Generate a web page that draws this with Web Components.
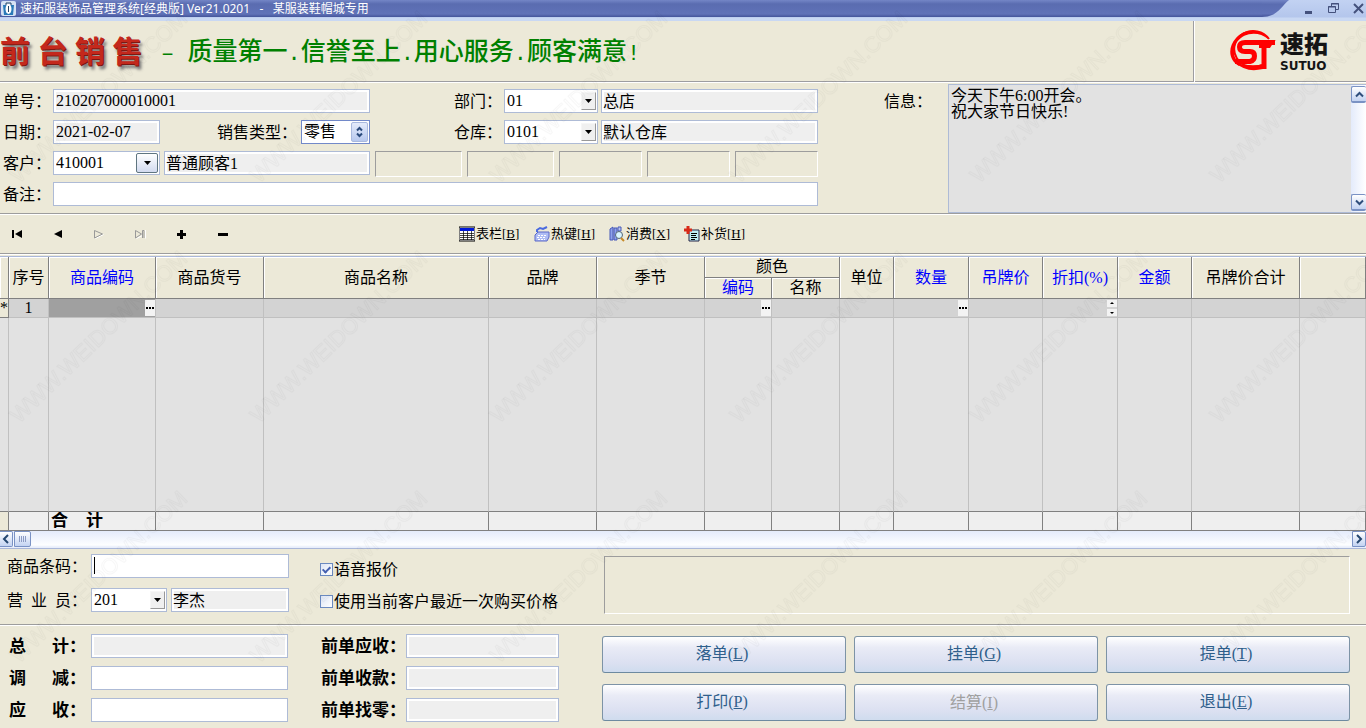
<!DOCTYPE html>
<html lang="zh-CN">
<head>
<meta charset="utf-8">
<title>速拓服装饰品管理系统</title>
<style>
html,body{margin:0;height:100%}
body{font:16px/20px "Liberation Serif","Noto Sans CJK SC",serif;color:#000;background:#ece9d8}
</style>
</head>
<body>
<st-window></st-window>
<script>
const define=(name,html,setup)=>{
  const t=document.createElement('template');
  t.innerHTML='<style>*{box-sizing:border-box}:host{display:block;box-sizing:border-box}</style>'+html;
  customElements.define(name,class extends HTMLElement{
    constructor(){super();this.attachShadow({mode:'open'})}
    connectedCallback(){
      if(this.shadowRoot.childNodes.length)return;
      this.shadowRoot.append(t.content.cloneNode(true));
      if(setup)setup(this,this.shadowRoot);
    }
  });
};

define('st-titlebar',`
<style>
:host{height:21px;background:linear-gradient(#c2d2f2,#b4c6ec 17px,#c9d8f3 18px);flex:none}
header{display:flex;height:21px;align-items:flex-start}
.main{flex:1;display:flex;align-items:center;height:17px;gap:4px;padding-left:1px;background:linear-gradient(#7486c6,#5a6cb0 4px,#6072b8 14px,#44549a);color:#fff;font:12px/16px "Noto Sans","Noto Sans CJK SC",sans-serif;white-space:pre}
.tail{width:34px;height:17px;flex:none}
nav{display:flex;width:70px;height:17px;align-items:center;gap:8px;padding-left:4px;overflow:hidden}
button{border:0;background:none;padding:0;width:17px;height:16px;flex:none}
svg{display:block}
</style>
<header><div class="main">
<svg width="15" height="15" viewBox="0 0 15 15"><rect width="15" height="15" rx="2" fill="#d6e2f4"/><path d="M2 4h11l-1 10H3z" fill="#2a7ab8"/><path d="M5 4V2h5v2" stroke="#246" fill="none"/><ellipse cx="7.500" cy="8" rx="3" ry="5" fill="#fff"/><path d="M7 5h1v6H7z" fill="#246"/></svg>
<span>速拓服装饰品管理系统[经典版] Ver21.0201   -   某服装鞋帽城专用</span></div>
<svg class="tail" viewBox="0 0 34 17"><defs><linearGradient id="g" x2="0" y2="1"><stop stop-color="#7486c6"/><stop offset=".25" stop-color="#5a6cb0"/><stop offset=".8" stop-color="#6072b8"/><stop offset="1" stop-color="#44549a"/></linearGradient></defs><path d="M0 0H27C20 5 16 17 0 17z" fill="url(#g)"/></svg>
<nav>
<button aria-label="最小化"><svg width="17" height="16"><path d="M5 10h7v3H5z" fill="#44517c"/></svg></button>
<button aria-label="还原"><svg width="17" height="16" fill="none" stroke="#44517c"><path d="M6.500 5V2.500h7v6H11M6 3h8"/><path d="M3.500 5.500h7v6h-7zM3 6h8"/></svg></button>
<button aria-label="关闭"><svg width="17" height="16"><path d="M4 3l9 9M13 3l-9 9" stroke="#44517c" stroke-width="2"/></svg></button>
</nav></header>`);

define('st-logo',`
<style>
:host{display:flex;gap:4px;align-items:center}
.n{display:flex;flex-direction:column;gap:4px;font-family:"Noto Sans CJK SC",sans-serif}
b{font-size:24px;line-height:26px;font-weight:900;color:#151515}
span{font:bold 12px/12px "DejaVu Sans",sans-serif;color:#151515}
</style>
<svg width="47" height="41" viewBox="0 0 47 41" fill="none" stroke="#f00">
<path d="M40 9A19 18 0 1 0 33 35" stroke-width="2"/>
<path d="M39 9C32-2 16-2 7 8C-2 18 0 31 10 36L12 34C4 29 3 20 8 12C15 2 30 1 39 9z" fill="#f00" stroke="none"/>
<path d="M46 12.500H16Q10.500 12.500 10.500 17T16 21.500H21Q25.500 21.500 25.500 26T21 31.500H6" stroke-width="5"/>
<path d="M35 15V39" stroke-width="5"/><path d="M7 33Q17 43 34 39L36 34Q22 37 7 33z" fill="#f00" stroke="none"/>
<path d="M47 10Q43 14 41 18H30V15H38z" fill="#f00" stroke="none"/>
</svg>
<div class="n"><b>速拓</b><span>SUTUO</span></div>`);

define('st-banner',`
<style>
:host{display:flex;height:62px;flex:none;border-bottom:1px solid #fff;box-shadow:inset 0 -1px #9d9da1}
.l{flex:1;display:flex;align-items:center;white-space:nowrap}
h1{margin:0;width:161px;font:bold 30px/56px "Liberation Serif","Noto Sans CJK SC",serif;color:#c4281c;text-shadow:1px 1px #7c1812,3px 4px 3px #777}
p{margin:0;color:#008000;font-size:25px;line-height:60px;font-weight:500}
i{font:22px/20px "Liberation Mono",monospace}
.r{width:173px;border-left:1px solid #9d9da1;box-shadow:inset 1px 0 #fff;padding:0 0 2px 35px;display:flex}
</style>
<div class="l"><h1>前 台 销 售</h1><p><i>– </i>质量第一<i>.</i>信誉至上<i>.</i>用心服务<i>.</i>顾客满意<i>!</i></p></div>
<div class="r"><st-logo></st-logo></div>`);

/* Labelled control. kind: text | list (flat arrow) | combo (raised arrow) | spin */
define('st-field',`
<style>
:host{display:flex;align-items:center;height:24px;flex:none}
:host([grow]){flex:1;min-width:0}
label{width:var(--label,50px);flex:none;white-space:nowrap;line-height:24px;padding-top:2px}
:host([strong]) label{font-weight:bold;font-size:17px}
label span{display:inline-block;width:var(--spread);text-align:justify;text-align-last:justify}
.box{position:relative;flex:1;display:flex;height:24px;min-width:0}
input,select{appearance:none;flex:1;min-width:0;width:100%;height:24px;margin:0;padding:0 2px;border:1px solid #aebbd6;border-radius:0;background:#fff;color:#000;font:inherit;line-height:20px;outline:0}
input[readonly]{background:#efefef;box-shadow:inset 0 0 0 2px #fff}
:host([name]) input{padding:0 1px 3px}
.arrow{position:absolute;top:3px;right:2px;width:15px;height:18px;background:#f0f0f0;border:1px solid;border-color:#f6f6f6 #999 #999 #f6f6f6;display:flex;align-items:center;justify-content:center;pointer-events:none}
:host([kind=combo]) .arrow{top:2px;width:22px;height:20px;border:1px solid #5f7580;border-radius:2px;background:linear-gradient(#fff,#d2daef)}
:host([kind=spin]) .arrow{top:2px;width:17px;height:20px;border:1px solid #a9b9de;border-radius:2px;background:linear-gradient(#e4ebfb,#b7c8ee)}
:host([kind=spin]) select{border-color:#7289c9}
</style>
<label for="c"></label><div class="box"></div>`,(el,root)=>{
  const kind=el.getAttribute('kind')||'text',label=root.querySelector('label'),box=root.querySelector('.box');
  const text=el.getAttribute('label'),value=el.getAttribute('value')||'';
  let c;
  if(kind==='text'){
    c=document.createElement('input');c.value=value;c.readOnly=el.hasAttribute('readonly');
    box.append(c);
  }else{
    c=document.createElement('select');c.add(new Option(value));
    const a=document.createElement('span');a.className='arrow';
    a.innerHTML=kind==='spin'
      ?'<svg width="9" height="12" fill="none" stroke="#2a4a7c" stroke-width="2"><path d="M2 4.500l2.500-2.500 2.500 2.500M2 7.500l2.500 2.500 2.500-2.500"/></svg>'
      :'<svg width="7" height="4"><path d="M0 0h7L3.500 4z"/></svg>';
    box.append(c,a);
  }
  c.id='c';
  if(text){
    if(text.includes(' ')){const s=document.createElement('span');s.textContent=text.slice(0,-1);label.append(s,'：')}
    else label.textContent=text;
  }else{label.remove();c.setAttribute('aria-label',el.getAttribute('name')||'')}
  if(el.hasAttribute('caret')){
    const k=document.createElement('span');k.style.cssText='position:absolute;left:3px;top:3px;width:1px;height:17px;background:#000';box.append(k);
  }
});

define('st-well',`<style>:host{border:1px solid;border-color:#9d9d9d #fff #fff #9d9d9d}</style><slot></slot>`);

define('st-memo',`
<style>
:host{display:flex;flex:1;min-width:0}
label{width:64px;line-height:36px;flex:none}
.b{flex:1;display:flex;border:1px solid #aebbd6;border-right:0;background:#e2e2e2;min-width:0}
textarea{flex:1;min-width:0;resize:none;border:0;margin:0;padding:3px 2px;background:none;font:inherit;line-height:16px;overflow:hidden;outline:0;color:#000}
.s{width:15px;display:flex;flex-direction:column;justify-content:space-between;padding:1px 0;background:linear-gradient(90deg,#e4ebfb,#fff)}
button{width:15px;height:17px;border:1px solid #7a92c4;border-width:1px 0 2px 1px;border-radius:2px;background:linear-gradient(#fff,#c3d3f2);padding:0;display:flex;align-items:center;justify-content:center}
</style>
<label for="m">信息：</label><div class="b"><textarea id="m" readonly>今天下午6:00开会。
祝大家节日快乐!</textarea><div class="s">
<button aria-label="向上"><svg width="9" height="7"><path d="M1 5.500l3.500-3.500L8 5.500" fill="none" stroke="#2f4e7c" stroke-width="2"/></svg></button>
<button aria-label="向下"><svg width="9" height="7"><path d="M1 1.500L4.500 5 8 1.500" fill="none" stroke="#2f4e7c" stroke-width="2"/></svg></button></div></div>`);

define('st-order',`
<style>
:host{display:flex;height:132px;flex:none;padding-left:3px;border-bottom:1px solid #fff;box-shadow:inset 0 -1px #9d9d9d}
.f{display:flex;flex-direction:column;gap:7px;padding-top:6px;width:815px;margin-right:66px;flex:none}
.r{display:flex;height:24px}
.l{display:flex;width:367px;justify-content:space-between;flex:none}
.q{display:flex;gap:3px;margin-left:84px;width:364px}
.w{display:flex;gap:5px;margin-left:5px;height:26px}
st-memo{padding:1px 0}
</style>
<div class="f">
<div class="r"><div class="l"><st-field grow label="单号：" value="210207000010001" readonly></st-field></div>
<div class="q"><st-field kind="list" label="部门：" value="01" style="width:144px"></st-field><st-field grow readonly name="部门名称" value="总店"></st-field></div></div>
<div class="r"><div class="l"><st-field label="日期：" value="2021-02-07" readonly style="width:157px"></st-field><st-field kind="spin" label="销售类型：" value="零售" style="width:153px;--label:84px"></st-field></div>
<div class="q"><st-field kind="list" label="仓库：" value="0101" style="width:144px"></st-field><st-field grow readonly name="仓库名称" value="默认仓库"></st-field></div></div>
<div class="r"><div class="l"><st-field kind="combo" label="客户：" value="410001" style="width:157px"></st-field><st-field readonly name="客户名称" value="普通顾客1" style="width:206px"></st-field></div>
<div class="w"><st-well style="width:87px"></st-well><st-well style="width:87px"></st-well><st-well style="width:83px"></st-well><st-well style="width:83px"></st-well><st-well style="width:83px"></st-well></div></div>
<div class="r"><st-field grow label="备注："></st-field></div>
</div><st-memo></st-memo>`);

const toolIcons={
table:'<path d="M0 1h16v14H0z" fill="#fff" stroke="#000"/><path d="M1 2h14v3H1z" fill="#0018d8"/><path d="M1 7.500h14M1 9.500h14M1 11.500h14M1 13.500h14M4.500 5v9M8.500 5v9M12.500 5v9" stroke="#000" stroke-opacity=".7"/>',
keys:'<path d="M3 6V4l3-2 3 1 4-2" fill="none" stroke="#4a6ae0" stroke-width="2"/><path d="M1 9l3-3h11v5l-2 4H1z" fill="#aebcf4" stroke="#5a68c8"/><path d="M4 9.500h9M3 11.500h9M4 13.500h7" stroke="#fff" stroke-dasharray="2 1"/>',
search:'<path d="M1 3l3-2v13H1zM5 2h3v12H5z" fill="#8fa2ea" stroke="#4658b8"/><path d="M9 1h3v4H9z" fill="#b8c4f0" stroke="#4658b8"/><circle cx="10" cy="9" r="3.500" fill="#d8f4ff" stroke="#567"/><path d="M12 12l3 3" stroke="#c88a28" stroke-width="2"/>',
add:'<path d="M5 4h10v11H5z" fill="#bfeef4" stroke="#224"/><path d="M7 7.500h6M7 9.500h5M7 11.500h6M7 13.500h4" stroke="#000"/><path d="M4 0v8M0 4h8" stroke="#d82a18" stroke-width="3"/>'};
define('st-tool',`
<style>:host{width:75px}button{border:0;padding:0;background:none;display:flex;align-items:center;gap:1px;font:13px/18px "Liberation Serif","Noto Sans CJK SC",serif;color:#000;white-space:nowrap}svg{flex:none}</style>
<button><svg width="16" height="16" viewBox="0 0 16 16"></svg><span></span></button>`,(el,root)=>{
  root.querySelector('svg').innerHTML=toolIcons[el.getAttribute('icon')];
  root.querySelector('span').innerHTML=el.getAttribute('text')+'[<u>'+el.getAttribute('key')+'</u>]';
});

define('st-toolbar',`
<style>
:host{display:flex;height:40px;flex:none;align-items:center;border-bottom:1px solid #fff;box-shadow:inset 0 -1px #9d9d9d;padding:0 0 2px 11px}
nav{display:flex;gap:29px;width:448px;flex:none}
nav button{border:0;background:none;padding:0;width:12px;height:12px}
svg{display:block}
.t{display:flex}
</style>
<nav>
<button aria-label="首条"><svg width="12" height="12"><path d="M1 2h2v8H1zM11 2v8L4 6z"/></svg></button>
<button aria-label="上一条"><svg width="12" height="12"><path d="M10 2v8L2 6z"/></svg></button>
<button aria-label="下一条" disabled><svg width="12" height="12" fill="none"><path d="M2.500 10.500l8-4" stroke="#fff"/><path d="M1.500 10V2.500l8 3.500-8 4" stroke="#999"/></svg></button>
<button aria-label="末条" disabled><svg width="12" height="12" fill="none"><path d="M2.500 10.500l6-3M11.500 2v8.500" stroke="#fff"/><path d="M1.500 10V2.500l6 3.500-6 4M10 10V2.500h-1.500V10" stroke="#999"/></svg></button>
<button aria-label="新增"><svg width="12" height="12"><path d="M6.500 2v9M2 6.500h9" stroke="#000" stroke-width="3"/></svg></button>
<button aria-label="删除"><svg width="12" height="12"><path d="M2 5h10v3H2z"/></svg></button>
</nav>
<div class="t"><st-tool icon="table" text="表栏" key="B"></st-tool><st-tool icon="keys" text="热键" key="H"></st-tool><st-tool icon="search" text="消费" key="X"></st-tool><st-tool icon="add" text="补货" key="H"></st-tool></div>`);

define('st-grid',`
<style>
:host{display:grid;flex:1;margin-top:1px;border-top:1px solid #aab7d8;background:#e2e2e2;min-height:240px}
table{width:100%;height:100%;border-spacing:0;table-layout:fixed}
th,td{padding:0;border-right:1px solid #c0c0c0;border-bottom:1px solid #c0c0c0;overflow:hidden;white-space:nowrap;text-align:center}
th{background:#ece9d8;border-color:#808080;box-shadow:inset 1px 1px #fff;font-weight:normal;height:21px;line-height:20px}
th.k{color:#00f}
.cur td{height:19px;background:#d3d3d3;line-height:18px}
.cur .m,.sum .m{background:#ece9d8;border-color:#808080;line-height:14px}
.cur .on{background:#a0a0a0}
.fill td{height:100%;border-bottom-color:#808080}
.sum td{height:19px;background:#efefef;border-color:#808080;font-weight:bold;font-size:17px;line-height:18px}
.sum span{display:block;width:52px;margin-left:2px;text-align:justify;text-align-last:justify}
.e{display:block;margin:1px 0 1px auto;width:10px;height:16px;border:0;padding:0;background:#f3f3f3}
.e svg{display:block;margin:auto}
</style>
<table>
<colgroup></colgroup>
<thead><tr><th rowspan="2"></th><th rowspan="2">序号</th><th rowspan="2" class="k">商品编码</th><th rowspan="2">商品货号</th><th rowspan="2">商品名称</th><th rowspan="2">品牌</th><th rowspan="2">季节</th><th colspan="2">颜色</th><th rowspan="2">单位</th><th rowspan="2" class="k">数量</th><th rowspan="2" class="k">吊牌价</th><th rowspan="2" class="k">折扣(%)</th><th rowspan="2" class="k">金额</th><th rowspan="2">吊牌价合计</th><th rowspan="2"></th></tr>
<tr><th class="k">编码</th><th>名称</th></tr></thead>
<tbody></tbody></table>`,(el,root)=>{
  root.querySelector('colgroup').innerHTML=[9,40,107,108,225,108,108,67,68,54,75,74,75,74,108,0].map(w=>w?`<col style="width:${w}px">`:'<col>').join('');
  const dots='<button class="e" aria-label="选择"><svg width="10" height="16"><path d="M1 7h2v2H1zM4 7h2v2H4zM7 7h2v2H7z"/></svg></button>';
  const spin='<button class="e" aria-label="调整"><svg width="10" height="16"><path d="M0 7h10v2H0z" fill="#d3d3d3"/><path d="M3 4h4L5 2zM3 12h4l-2 2z"/></svg></button>';
  const row=(cls,map)=>`<tr class="${cls}">`+Array.from({length:16},(_,i)=>`<td${i===0?' class="m"':i===2&&cls==='cur'?' class="on"':''}>${map[i]||''}</td>`).join('')+'</tr>';
  root.querySelector('tbody').innerHTML=row('cur',{0:'*',1:'1',2:dots,7:dots,10:dots,12:spin})+row('fill',{})+row('sum',{2:'<span>合 计</span>'});
});

define('st-hscroll',`
<style>
:host{display:flex;height:18px;flex:none;background:linear-gradient(#e4ebfb,#fdfeff 14px,#e8eefb 16px);border-bottom:1px solid #aab7d8}
button{height:16px;padding:0;border:1px solid #7a92c4;border-left:0;border-radius:0 2px 2px 0;background:linear-gradient(#fff,#c3d3f2);display:flex;align-items:center;justify-content:center}
.a{width:13px}.b{width:17px;margin:0 auto 0 1px;border-left:1px solid #7a92c4}.c{width:14px;border-left:1px solid #7a92c4}
</style>
<button class="a" aria-label="向左"><svg width="8" height="10"><path d="M6 1L2 5l4 4" fill="none" stroke="#24466f" stroke-width="2"/></svg></button>
<button class="b" aria-label="滑块"><svg width="9" height="6"><path d="M1.500 0v6M3.500 0v6M5.500 0v6M7.500 0v6" stroke="#8c9cc4"/></svg></button>
<button class="c" aria-label="向右"><svg width="8" height="10"><path d="M2 1l4 4-4 4" fill="none" stroke="#24466f" stroke-width="2"/></svg></button>`);

define('st-check',`
<style>
:host{height:20px}
label{display:flex;gap:1px;align-items:center;white-space:nowrap}
input{appearance:none;width:13px;height:13px;margin:0;border:1px solid #6b8ac0;background:linear-gradient(135deg,#dde5f5,#fff);display:grid}
input:checked::before{content:"";width:3px;height:6px;margin:0 auto 1px;align-self:center;border:solid #4560b0;border-width:0 2px 2px 0;transform:rotate(45deg)}
span{padding-top:2px}
</style>
<label><input type="checkbox"><span><slot></slot></span></label>`,(el,root)=>{root.querySelector('input').checked=el.hasAttribute('checked')});

define('st-entry',`
<style>
:host{display:flex;height:77px;flex:none;padding:5px 16px 0 7px;border-bottom:1px solid #fff;box-shadow:inset 0 -1px #9d9d9d}
.a{display:flex;flex-direction:column;gap:10px;width:282px;flex:none}
.r{display:flex;gap:4px}
.c{display:flex;flex-direction:column;gap:12px;width:284px;margin-left:31px;padding-top:4px;flex:none}
st-well{flex:1;height:58px;margin-top:2px}
st-field{--label:84px;--spread:64px}
</style>
<div class="a"><st-field label="商品条码：" caret></st-field>
<div class="r"><st-field kind="list" label="营 业 员：" value="201" style="width:160px"></st-field><st-field grow readonly name="营业员姓名" value="李杰"></st-field></div></div>
<div class="c"><st-check checked>语音报价</st-check><st-check>使用当前客户最近一次购买价格</st-check></div>
<st-well></st-well>`);

define('st-action',`
<style>
button{width:100%;height:37px;border:1px solid #7d93a6;border-bottom-color:#6d8aa0;border-radius:3px;background:linear-gradient(#fff,#e9ebf6 30%,#dbe0f1 75%,#cfdcee);color:#2f5f8c;font:inherit;line-height:20px;padding:0 4px 1px 0}
button:disabled{color:#a0a0a0;padding:1px 4px 0 0}
</style><button><slot></slot>(<u></u>)</button>`,(el,root)=>{
  root.querySelector('u').textContent=el.getAttribute('key');
  root.querySelector('button').disabled=el.hasAttribute('disabled');
});

define('st-checkout',`
<style>
:host{display:flex;height:102px;flex:none;padding:8px 16px 0 9px}
.a,.b{display:flex;flex-direction:column;gap:8px;flex:none}
.a{width:279px;--label:82px;--spread:60px}
.b{width:238px;margin-left:33px;--label:85px}
.g{flex:1;display:grid;grid-template-columns:repeat(3,1fr);gap:11px 8px;margin-left:43px;padding-top:2px;align-content:start}
</style>
<div class="a"><st-field strong label="总 计：" readonly></st-field><st-field strong label="调 减："></st-field><st-field strong label="应 收："></st-field></div>
<div class="b"><st-field strong label="前单应收：" readonly></st-field><st-field strong label="前单收款：" readonly></st-field><st-field strong label="前单找零：" readonly></st-field></div>
<div class="g"><st-action key="L">落单</st-action><st-action key="G">挂单</st-action><st-action key="T">提单</st-action><st-action key="P">打印</st-action><st-action key="I" disabled>结算</st-action><st-action key="E">退出</st-action></div>`);

define('st-watermark',`
<style>:host{position:absolute;inset:0;pointer-events:none;overflow:hidden}svg{display:block}</style>
<svg width="100%" height="100%"><defs><pattern id="w" width="240" height="240" patternUnits="userSpaceOnUse"><text transform="translate(19 184) rotate(-44)" font-family="Liberation Sans" font-size="22" fill="none" stroke="#000" stroke-opacity=".03">WWW.WEIDOWN.COM</text></pattern></defs><rect width="100%" height="100%" fill="url(#w)"/></svg>`);

define('st-window',`
<style>:host{position:relative;display:flex;flex-direction:column;min-height:100vh;min-width:1200px;overflow:hidden}</style>
<st-titlebar></st-titlebar><st-banner></st-banner><st-order></st-order><st-toolbar></st-toolbar><st-grid></st-grid><st-hscroll></st-hscroll><st-entry></st-entry><st-checkout></st-checkout><st-watermark></st-watermark>`);
</script>
</body>
</html>
